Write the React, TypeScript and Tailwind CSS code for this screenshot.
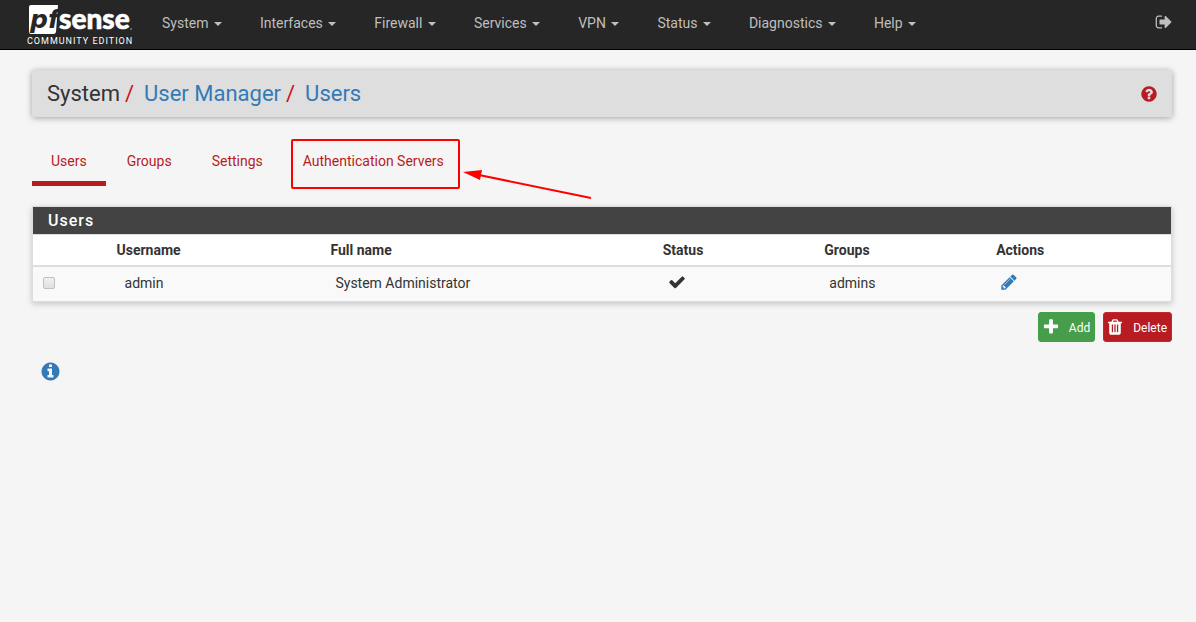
import type { ReactNode } from "react";

const DISC =
  "m640 416q0 209-103 385.500t-279.500 279.500-385.500 103-385.500-103-279.500-279.500-103-385.500 103-385.500 279.500-279.500 385.500-103 385.500 103 279.500 279.500 103 385.500z";

const ICONS = {
  signOut:
    "M704 1440q0 4 1 20t.5 26.500-3 23.500-10 19.500-20.500 6.500h-320q-119 0-203.500-84.500t-84.500-203.500v-704q0-119 84.500-203.500t203.500-84.500h320q13 0 22.500 9.500t9.500 22.500q0 4 1 20t.5 26.500-3 23.500-10 19.500-20.500 6.500h-320q-66 0-113 47t-47 113v704q0 66 47 113t113 47h312l11.500 1 11.500 3 8 5.500 7 9 2 13.500zm928-544q0 26-19 45l-544 544q-19 19-45 19t-45-19-19-45v-288h-448q-26 0-45-19t-19-45v-384q0-26 19-45t45-19h448v-288q0-26 19-45t45-19 45 19l544 544q19 19 19 45z",
  check:
    "M1671 566q0 40-28 68l-724 724-136 136q-28 28-68 28t-68-28l-136-136-362-362q-28-28-28-68t28-68l136-136q28-28 68-28t68 28l294 295 656-657q28-28 68-28t68 28l136 136q28 28 28 68z",
  pencil:
    "M491 1536l91-91-235-235-91 91v107h128v128h107zm523-928q0-22-22-22-10 0-17 7l-542 542q-7 7-7 17 0 22 22 22 10 0 17-7l542-542q7-7 7-17zm-54-192l416 416-832 832h-416v-416zm683 96q0 53-37 90l-166 166-416-416 166-165q36-38 90-38 53 0 91 38l235 234q37 39 37 91z",
  plus: "M1600 736v192q0 40-28 68t-68 28h-416v416q0 40-28 68t-68 28h-192q-40 0-68-28t-28-68v-416h-416q-40 0-68-28t-28-68v-192q0-40 28-68t68-28h416v-416q0-40 28-68t68-28h192q40 0 68 28t28 68v416h416q40 0 68 28t28 68z",
  trash:
    "M704 1376v-704q0-14-9-23t-23-9h-64q-14 0-23 9t-9 23v704q0 14 9 23t23 9h64q14 0 23-9t9-23zm256 0v-704q0-14-9-23t-23-9h-64q-14 0-23 9t-9 23v704q0 14 9 23t23 9h64q14 0 23-9t9-23zm256 0v-704q0-14-9-23t-23-9h-64q-14 0-23 9t-9 23v704q0 14 9 23t23 9h64q14 0 23-9t9-23zm-544-992h448l-48-117q-7-9-17-11h-317q-10 2-17 11zm928 32v64q0 14-9 23t-23 9h-96v948q0 83-47 143.500t-113 60.500h-832q-66 0-113-58.500t-47-141.500v-952h-96q-14 0-23-9t-9-23v-64q0-14 9-23t23-9h309l70-167q15-37 54-63t79-26h320q40 0 79 26t54 63l70 167h309q14 0 23 9t9 23z",
  question:
    "M1024 1376v-192q0-14-9-23t-23-9h-192q-14 0-23 9t-9 23v192q0 14 9 23t23 9h192q14 0 23-9t9-23zm256-672q0-88-55.500-163t-138.500-116-170-41q-243 0-371 213-15 24 8 42l132 100q7 6 19 6 16 0 25-12 53-68 86-92 34-24 86-24 48 0 85.500 26t37.500 59q0 38-20 61t-68 45q-63 28-115.500 86.500t-52.500 125.500v36q0 14 9 23t23 9h192q14 0 23-9t9-23q0-19 21.500-49.500t54.500-49.500q32-18 49-28.500t46-35 44.500-48 28-60.500 12.500-81zm384 192q0 209-103 385.500t-279.500 279.500-385.500 103-385.500-103-279.500-279.500-103-385.500 103-385.500 279.500-279.500 385.500-103 385.500 103 279.500 279.500 103 385.500z",
  info:
    "M1152 1376v-160q0-14-9-23t-23-9h-96v-512q0-14-9-23t-23-9h-320q-14 0-23 9t-9 23v160q0 14 9 23t23 9h96v320h-96q-14 0-23 9t-9 23v160q0 14 9 23t23 9h448q14 0 23-9t9-23zm-128-896v-160q0-14-9-23t-23-9h-192q-14 0-23 9t-9 23v160q0 14 9 23t23 9h192q14 0 23-9t9-23z" +
    DISC,
};

function Icon({ name, className }: { name: keyof typeof ICONS; className: string }) {
  return (
    <svg viewBox="0 0 1792 1792" fill="currentColor" aria-hidden="true" className={className}>
      <path d={ICONS[name]} />
    </svg>
  );
}

const MENUS = ["System", "Interfaces", "Firewall", "Services", "VPN", "Status", "Diagnostics", "Help"];
const COLUMNS = ["Username", "Full name", "Status", "Groups", "Actions"];

function Logo() {
  return (
    <a href="#" className="flex w-[106px] flex-col text-white">
      <svg viewBox="0 0 106 30" className="h-[30px] w-[106px] overflow-visible" role="img" aria-label="pfsense">
        <path d="M4 0H31L29 27Q28.500 29 26.500 29H4Q2 29 2 27V2Q2 0 4 0Z" fill="#fff" />
        <text x="3" y="23" fontFamily="DejaVu Sans, sans-serif" fontWeight="700" fontStyle="italic" fontSize="25" fill="#262626">
          pf
        </text>
        <text
          x="32"
          y="24"
          fontFamily="Lato, sans-serif"
          fontWeight="900"
          fontSize="28"
          fill="#fff"
          stroke="#fff"
          strokeWidth="0.6"
        >
          sense
        </text>
        <circle cx="104" cy="24" r="1" fill="#777" />
      </svg>
      <span className="text-[9px] leading-3 tracking-[1px] whitespace-nowrap">COMMUNITY EDITION</span>
    </a>
  );
}

function Navbar() {
  return (
    <header className="flex h-[50px] items-start border-b border-black bg-[#262626] pr-[23px] pl-[27px]">
      <div className="pt-[5px]">
        <Logo />
      </div>
      <nav className="ml-[10px] flex">
        {MENUS.map((m) => (
          <button key={m} type="button" className="px-[19px] py-[13px] text-[14px] leading-5 text-[#bfbfbf]">
            {m}{" "}
            <span className="ml-[2px] inline-block border-x-4 border-t-4 border-x-transparent border-t-[#bfbfbf] align-middle" />
          </button>
        ))}
      </nav>
      <button type="button" aria-label="Log out" className="ml-auto pt-[13px] text-[#bfbfbf]">
        <Icon name="signOut" className="size-[18px]" />
      </button>
    </header>
  );
}

function Tab({ children, active }: { children: ReactNode; active?: boolean }) {
  return (
    <a
      href="#"
      className={
        active
          ? "mr-px border-b-[5px] border-[#b71c23] px-[19px] pt-3 pb-[10px] text-[#b71c23]"
          : "border-b-[5px] border-transparent px-5 pt-3 pb-[10px] text-[#b71c23]"
      }
    >
      {children}
    </a>
  );
}

function Slash() {
  return <span className="mr-[10px] ml-[5px] text-[#c9121c]">/</span>;
}

export default function App() {
  return (
    <div className="min-h-screen bg-[#f5f5f5] font-['Roboto',sans-serif] text-[14px] leading-5 text-[#333]">
      <Navbar />
      <main className="px-6 pt-5 pl-8">
        <div className="flex items-center justify-between rounded-[2px] bg-[#dedede] py-[11px] pr-[14px] pl-[15px] shadow-[0_1px_6px_rgba(0,0,0,0.35)]">
          <h1 className="flex pt-px text-[22px] leading-6">
            <span>System</span>
            <Slash />
            <a href="#" className="text-[#337ab7]">User Manager</a>
            <Slash />
            <a href="#" className="text-[#337ab7]">Users</a>
          </h1>
          <button type="button" aria-label="Help" className="text-[#b71c23]">
            <Icon name="question" className="size-[18px]" />
          </button>
        </div>

        <nav className="mt-[22px] flex h-[67px] items-start">
          <Tab active>Users</Tab>
          <Tab>Groups</Tab>
          <Tab>Settings</Tab>
          <div className="relative ml-2 h-[50px] rounded-[2px] border-2 border-[#f00] pt-[10px] pr-[14px] pl-[10px]">
            <a href="#" className="text-[#b71c23]">Authentication Servers</a>
            <svg viewBox="0 0 130 32" className="absolute top-[28px] left-[170px] h-[32px] w-[130px]" aria-hidden="true">
              <path d="M16 6L128 29" stroke="#f00" strokeWidth="2" />
              <path d="M0 3L19 1L17 11Z" fill="#f00" />
            </svg>
          </div>
        </nav>

        <section className="border border-[#ddd] bg-white shadow-[0_2px_6px_rgba(0,0,0,0.2)]">
          <h2 className="bg-[#434343] pt-1 pb-[3px] pl-[15px] text-[16px] leading-5 font-medium tracking-[1px] text-white">Users</h2>
          <table className="w-full table-fixed text-left">
            <colgroup>
              <col className="w-[6.9%]" />
              <col className="w-[18.8%]" />
              <col className="w-[29.2%]" />
              <col className="w-[14.2%]" />
              <col className="w-[15.1%]" />
              <col />
            </colgroup>
            <thead>
              <tr className="border-t border-b-2 border-[#ddd]">
                <th />
                {COLUMNS.map((c) => (
                  <th key={c} className="p-[5px] font-bold">{c}</th>
                ))}
              </tr>
            </thead>
            <tbody>
              <tr className="h-[35px] bg-[#f9f9f9]">
                <td className="pb-[2px] pl-[10px]">
                  <input
                    type="checkbox"
                    aria-label="Select admin"
                    className="block size-3 appearance-none rounded-[2px] border border-[#c0c0c0] bg-linear-to-b from-[#f0f0f0] to-[#e0e0e0]"
                  />
                </td>
                <td className="pb-[3px] pl-[13px]">admin</td>
                <td className="pb-[3px] pl-[10px]">System Administrator</td>
                <td className="pb-1 pl-[10px]">
                  <Icon name="check" className="size-[18px]" />
                </td>
                <td className="pb-[3px] pl-[10px]">admins</td>
                <td className="pb-1 pl-[9px]">
                  <a href="#" aria-label="Edit user" className="block text-[#337ab7]">
                    <Icon name="pencil" className="size-[18px]" />
                  </a>
                </td>
              </tr>
            </tbody>
          </table>
        </section>

        <div className="mt-[10px] flex justify-end gap-2 text-[12px] leading-[18px] text-white">
          <button type="button" className="flex h-[30px] items-center gap-[9px] rounded-[3px] border border-[#43a047] bg-[#469e4c] pr-1 pl-[3px]">
            <Icon name="plus" className="size-[18px]" />
            <span className="pt-[2px]">Add</span>
          </button>
          <button type="button" className="flex h-[30px] items-center gap-[9px] rounded-[3px] border border-[#c62828] bg-[#b71c23] pr-1 pl-[2px]">
            <Icon name="trash" className="size-[18px]" />
            <span className="pt-[2px]">Delete</span>
          </button>
        </div>

        <button type="button" aria-label="Information" className="mt-[19px] ml-2 block text-[#337ab7]">
          <Icon name="info" className="size-[21px]" />
        </button>
      </main>
    </div>
  );
}
